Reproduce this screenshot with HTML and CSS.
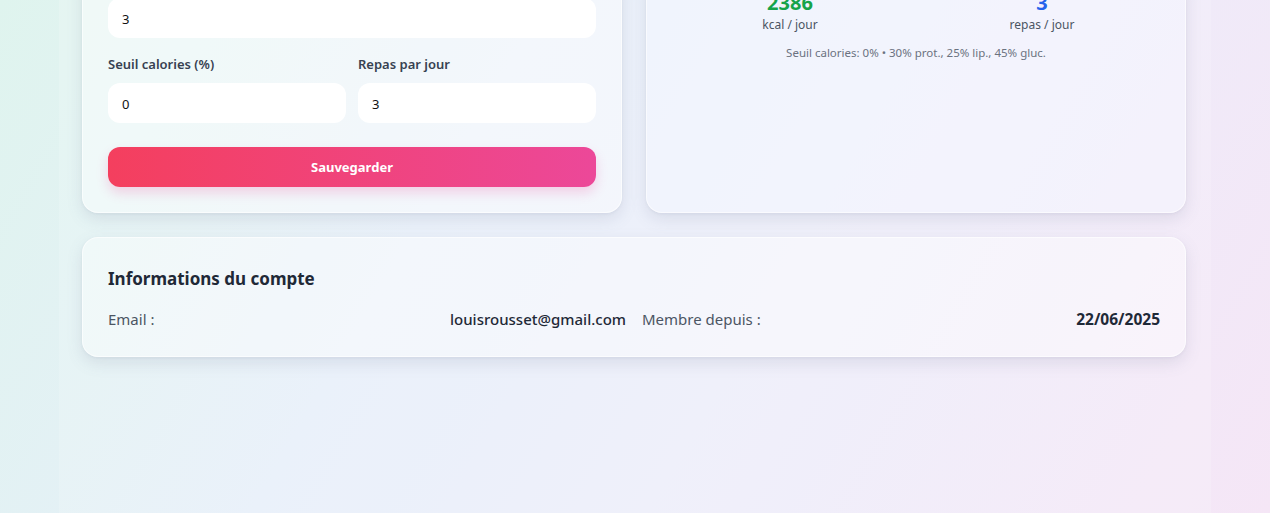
FILE: index.html
```html
<!DOCTYPE html>
<html lang="fr">
<head>
<meta charset="utf-8">
<title>Profil</title>
<link rel="stylesheet" href="styles.css">
</head>
<body>
<main class="container">
  <div class="grid">
    <section class="card form-card">
      <div class="input">3</div>
      <div class="row">
        <div class="field">
          <label class="label">Seuil calories (%)</label>
          <div class="input">0</div>
        </div>
        <div class="field">
          <label class="label">Repas par jour</label>
          <div class="input">3</div>
        </div>
      </div>
      <button class="btn">Sauvegarder</button>
    </section>
    <section class="card summary-card">
      <div class="stats">
        <div class="stat">
          <div class="num green">2386</div>
          <div class="unit">kcal / jour</div>
        </div>
        <div class="stat">
          <div class="num blue">3</div>
          <div class="unit">repas / jour</div>
        </div>
      </div>
      <p class="note">Seuil calories: 0% • 30% prot., 25% lip., 45% gluc.</p>
    </section>
  </div>
  <section class="card account">
    <h2 class="title">Informations du compte</h2>
    <div class="info">
      <div class="info-item"><span class="key">Email :</span><span class="val">louisrousset@gmail.com</span></div>
      <div class="info-item"><span class="key">Membre depuis :</span><span class="val strong">22/06/2025</span></div>
    </div>
  </section>
</main>
</body>
</html>
```

FILE: styles.css
```css
html, body { margin: 0; padding: 0; }
body {
  min-height: 100vh;
  font-family: "Noto Sans", "Open Sans", sans-serif;
  background: linear-gradient(120deg, #dff4ee 0%, #e6eff9 35%, #ecedfa 60%, #f5e6f6 100%);
  overflow: hidden;
}
.container {
  max-width: 1152px;
  margin: 0 auto;
  padding: 0 25px 0 23px;
  min-height: calc(100vh + 28px);
  box-sizing: border-box;
  background: rgba(255,255,255,0.16);
}
.grid {
  display: grid;
  grid-template-columns: 1fr 1fr;
  gap: 24px;
  margin-top: -28px;
}
.card {
  background: rgba(255,255,255,0.42);
  border: 1px solid rgba(255,255,255,0.6);
  border-radius: 16px;
  box-shadow: 0 6px 16px rgba(100,110,140,0.15), 0 1px 3px rgba(100,110,140,0.08);
  padding: 25px;
}
.summary-card { background: rgba(246,248,255,0.5); }
.form-card { display: flex; flex-direction: column; }
.input {
  height: 40px;
  box-sizing: border-box;
  background: #fff;
  border-radius: 12px;
  padding: 2px 14px 0;
  display: flex;
  align-items: center;
  font-size: 13px;
  color: #111;
}
.row {
  display: grid;
  grid-template-columns: 1fr 1fr;
  gap: 12px;
  margin-top: 16px;
}
.label {
  display: block;
  font-size: 13px;
  font-weight: 600;
  line-height: 20px;
  color: #374151;
  margin-bottom: 9px;
}
.btn {
  margin-top: 24px;
  height: 40px;
  border: none;
  border-radius: 12px;
  background: linear-gradient(90deg, #f43f5e, #ec4899);
  color: #fff;
  font-family: inherit;
  font-size: 13px;
  font-weight: 700;
  box-shadow: 0 6px 12px rgba(236,72,153,0.22);
}
.stats {
  display: grid;
  grid-template-columns: 1fr 1fr;
  gap: 16px;
  margin-top: -9px;
  text-align: center;
}
.num { font-size: 20px; font-weight: 700; line-height: 28px; }
.green { color: #16a34a; }
.blue { color: #2563eb; }
.unit { font-size: 12px; line-height: 16px; color: #4b5563; }
.note {
  margin: 12px 0 0;
  text-align: center;
  font-size: 11.5px;
  line-height: 16px;
  color: #6b7280;
}
.account { margin-top: 24px; }
.title {
  margin: 2px 0 0;
  font-size: 17px;
  line-height: 28px;
  font-weight: 700;
  color: #1f2937;
}
.info {
  display: grid;
  grid-template-columns: 1fr 1fr;
  gap: 16px;
  margin-top: 14px;
}
.info-item {
  display: flex;
  justify-content: space-between;
  font-size: 15px;
  line-height: 24px;
}
.key { color: #4b5563; }
.val { color: #1f2937; font-weight: 500; }
.strong { font-weight: 700; font-size: 15.5px; }
```
